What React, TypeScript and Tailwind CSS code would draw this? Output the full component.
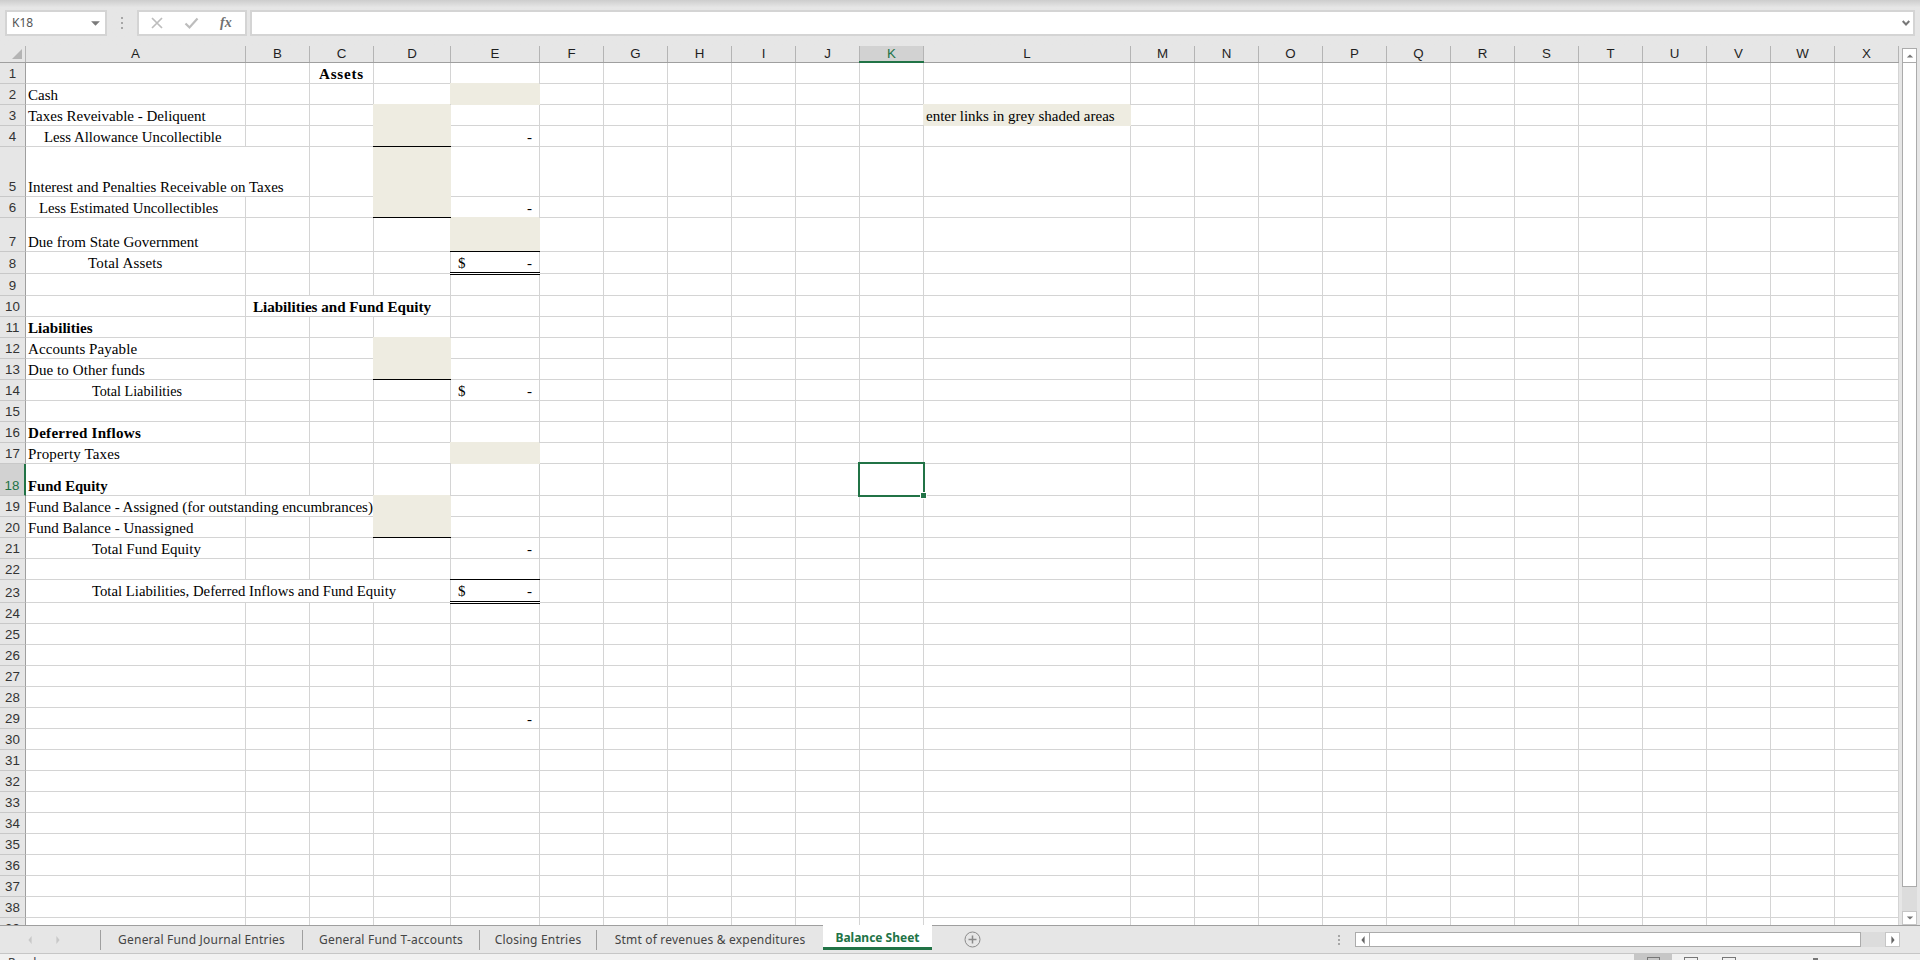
import React from "react";

const cols: [string, string][] = [
  ["A", "w-[220px]"], ["B", "w-[64px]"], ["C", "w-[64px]"], ["D", "w-[77px]"], ["E", "w-[89px]"],
  ["F", "w-[64px]"], ["G", "w-[64px]"], ["H", "w-[64px]"], ["I", "w-[64px]"], ["J", "w-[64px]"], ["K", "w-[64px]"],
  ["L", "w-[207px]"], ["M", "w-[64px]"], ["N", "w-[64px]"], ["O", "w-[64px]"], ["P", "w-[64px]"], ["Q", "w-[64px]"],
  ["R", "w-[64px]"], ["S", "w-[64px]"], ["T", "w-[64px]"], ["U", "w-[64px]"], ["V", "w-[64px]"], ["W", "w-[64px]"], ["X", "w-[64px]"],
];

const heights: Record<number, string> = { 5: "h-[50px]", 7: "h-[34px]", 8: "h-[22px]", 9: "h-[22px]", 18: "h-[32px]", 23: "h-[23px]" };

type Cell = {
  t?: string;
  pad?: string;
  size?: string;
  bold?: boolean;
  center?: boolean;
  fill?: boolean;
  line?: boolean;
  dbl?: boolean;
  dash?: boolean;
  dollar?: boolean;
  noR?: boolean;
  sel?: boolean;
};

const data: Record<number, Record<string, Cell>> = {
  1: { C: { t: "Assets", bold: true, center: true, size: "text-[15.1px] tracking-[0.8px]" } },
  2: { A: { t: "Cash" }, E: { fill: true } },
  3: { A: { t: "Taxes Reveivable - Deliquent" }, D: { fill: true }, L: { t: "enter links in grey shaded areas", fill: true } },
  4: { A: { t: "Less Allowance Uncollectible", pad: "pl-[18px]", size: "text-[14.8px]" }, D: { fill: true, line: true }, E: { dash: true } },
  5: { A: { t: "Interest and Penalties Receivable on Taxes", noR: true }, D: { fill: true } },
  6: { A: { t: "Less Estimated Uncollectibles", pad: "pl-[13px]", size: "text-[14.8px]" }, D: { fill: true, line: true }, E: { dash: true } },
  7: { A: { t: "Due from State Government" }, E: { fill: true, line: true } },
  8: { A: { t: "Total Assets", pad: "pl-[62px] pb-[1px]", size: "text-[15px] tracking-[0.15px]" }, E: { dollar: true, dash: true, dbl: true, pad: "pb-[1px]" } },
  10: { B: { noR: true }, C: { t: "Liabilities and Fund Equity", bold: true, center: true, noR: true } },
  11: { A: { t: "Liabilities", bold: true } },
  12: { A: { t: "Accounts Payable", size: "text-[15px] tracking-[0.08px]" }, D: { fill: true } },
  13: { A: { t: "Due to Other funds", size: "text-[15px] tracking-[0.08px]" }, D: { fill: true, line: true } },
  14: { A: { t: "Total Liabilities", pad: "pl-[66px]", size: "text-[14.2px]" }, E: { dollar: true, dash: true } },
  16: { A: { t: "Deferred Inflows", bold: true, size: "text-[15.1px] tracking-[0.25px]" } },
  17: { A: { t: "Property Taxes", size: "text-[15px] tracking-[0.15px]" }, E: { fill: true } },
  18: { A: { t: "Fund Equity", bold: true, size: "text-[14.7px]" }, K: { sel: true } },
  19: { A: { t: "Fund Balance - Assigned (for outstanding encumbrances)", noR: true }, B: { noR: true }, C: { noR: true }, D: { fill: true } },
  20: { A: { t: "Fund Balance - Unassigned" }, D: { fill: true, line: true } },
  21: { A: { t: "Total Fund Equity", pad: "pl-[66px]" }, E: { dash: true } },
  22: { E: { line: true } },
  23: { A: { t: "Total Liabilities, Deferred Inflows and Fund Equity", pad: "pl-[66px] pb-[2px]", size: "text-[14.75px]", noR: true }, B: { noR: true }, C: { noR: true }, E: { dollar: true, dash: true, dbl: true, pad: "pb-[2px]" } },
  29: { E: { dash: true } },
};

function GridCell({ width, c }: { width: string; c?: Cell }) {
  const cell = c ?? {};
  const border = cell.fill
    ? "bg-[#eeece1] border-r border-b border-[#eeece1] shadow-[-1px_-1px_0_0_#eeece1]"
    : cell.noR
    ? "border-b border-[#d4d4d4]"
    : "border-r border-b border-[#d4d4d4]";
  const just = cell.center ? "justify-center" : cell.dollar ? "justify-between px-[7px]" : cell.dash ? "justify-end pr-[7px]" : "justify-start";
  return (
    <div className={`relative flex h-full shrink-0 items-end ${width} ${border} ${just} ${cell.pad ?? (cell.center || cell.dash ? "" : "pl-[2px]")}`}>
      {cell.t && (
        <span className={`relative z-[1] whitespace-nowrap leading-[17px] text-black ${cell.bold ? "font-bold" : ""} ${cell.size ?? (cell.bold ? "text-[15.1px]" : "text-[15px]")}`}>{cell.t}</span>
      )}
      {cell.dollar && <span className="whitespace-nowrap text-[15px] leading-[17px] text-black">$</span>}
      {cell.dash && <span className="whitespace-nowrap text-[15px] leading-[17px] text-black">-</span>}
      {cell.line && <div className="absolute -left-px right-[-1px] bottom-[-1px] z-10 h-px bg-black" />}
      {cell.dbl && <div className="absolute -left-px right-[-1px] bottom-[-2px] z-10 h-[3px] border-y border-black bg-white" />}
      {cell.sel && (
        <>
          <div className="absolute -top-[2px] -left-[2px] z-20 h-[35px] w-[67px] border-2 border-[#217346]" />
          <div className="absolute top-[28px] left-[60px] z-30 h-[7px] w-[7px] border border-white bg-[#217346]" />
        </>
      )}
    </div>
  );
}

function Tri({ dir, color = "#777777", size = 7 }: { dir: "up" | "down" | "left" | "right"; color?: string; size?: number }) {
  const p = { up: "0,7 4,3 8,7", down: "0,3 8,3 4,7", left: "6,0 6,10 2,5", right: "2,0 2,10 6,5" }[dir];
  return (
    <svg width={size + 1} height={size + 1} viewBox="0 0 8 10" fill={color}>
      <polygon points={p} />
    </svg>
  );
}

function VDots({ gap = "gap-[3px]" }: { gap?: string }) {
  return (
    <div className={`flex flex-col ${gap}`}>
      <div className="h-[2px] w-[2px] bg-[#a6a6a6]" />
      <div className="h-[2px] w-[2px] bg-[#a6a6a6]" />
      <div className="h-[2px] w-[2px] bg-[#a6a6a6]" />
    </div>
  );
}

function TopBar() {
  return (
    <div className="flex h-[46px] shrink-0 items-start bg-gradient-to-b from-[#cdcdcd] from-0% to-[#e6e6e6] to-[16%] pt-[10px] pl-[5px] pr-[5px]">
      <div className="flex h-[26px] w-[102px] items-center justify-between border-2 border-[#d4d4d4] bg-white pr-[4px] pl-[5px]">
        <span className="text-[12px] text-[#555555] font-['Noto_Sans',sans-serif]">K18</span>
        <Tri dir="down" color="#7a7a7a" size={10} />
      </div>
      <div className="flex h-[26px] w-[30px] items-center justify-center">
        <VDots />
      </div>
      <div className="flex h-[26px] w-[110px] items-center border-2 border-[#d4d4d4] bg-white pl-[11px]">
        <svg width="14" height="14" viewBox="0 0 14 14" fill="none" stroke="#bdbdbd" strokeWidth="1.7">
          <path d="M2 2 L12 12 M12 2 L2 12" />
        </svg>
        <svg className="ml-[20px]" width="15" height="14" viewBox="0 0 15 14" fill="none" stroke="#bdbdbd" strokeWidth="2.2">
          <path d="M1.5 7.5 L5.5 11.5 L13.5 2.5" />
        </svg>
        <span className="ml-[21px] text-[14px] font-bold italic leading-none text-[#707070] font-['Liberation_Serif',serif]">fx</span>
      </div>
      <div className="ml-[3px] flex h-[26px] flex-1 items-center justify-end border-2 border-[#d4d4d4] bg-white pr-[3px]">
        <svg width="8" height="6" viewBox="0 0 8 6" fill="none" stroke="#777777" strokeWidth="2">
          <path d="M0.7 1 L4 4.5 L7.3 1" />
        </svg>
      </div>
    </div>
  );
}

function HeaderRow() {
  return (
    <div className="flex h-[17px] shrink-0 border-b border-[#9f9f9f]">
      <div className="flex w-[26px] shrink-0 items-end justify-end border-r border-[#b4b4b4] pr-[3px] pb-[3px]">
        <svg width="10" height="10" viewBox="0 0 10 10" fill="#b4b4b4"><polygon points="10,0 10,10 0,10" /></svg>
      </div>
      {cols.map(([n, w]) =>
        n === "K" ? (
          <div key={n} className={`relative flex shrink-0 items-center justify-center border-r border-[#b4b4b4] bg-[#d2d2d2] text-[13.33px] leading-none text-[#217346] ${w}`}>
            {n}
            <div className="absolute right-[-1px] bottom-[-1px] -left-px h-[2px] bg-[#217346]" />
          </div>
        ) : (
          <div key={n} className={`flex shrink-0 items-center justify-center border-r border-[#b4b4b4] text-[13.33px] leading-none text-[#1f1f1f] ${w}`}>
            {n}
          </div>
        ),
      )}
    </div>
  );
}

function Row({ n }: { n: number }) {
  const h = heights[n] ?? "h-[21px]";
  const active = n === 18;
  return (
    <div className={`flex shrink-0 ${h}`}>
      <div
        className={`flex h-full w-[26px] shrink-0 items-end justify-center border-b pb-[1px] text-[13.33px] leading-[17px] ${
          active ? "border-r-2 border-b-[#c8c8c8] border-r-[#217346] bg-[#d2d2d2] text-[#217346]" : "border-r border-b-[#c8c8c8] border-r-[#9f9f9f] text-[#333333]"
        }`}
      >
        {n}
      </div>
      <div className="flex h-full font-['Liberation_Serif',serif]">
        {cols.map(([c, w]) => (
          <GridCell key={c} width={w} c={data[n]?.[c]} />
        ))}
      </div>
    </div>
  );
}

function VScroll() {
  return (
    <div className="flex w-[21px] shrink-0 flex-col pt-[2px] pl-[3px]">
      <div className="flex h-[15px] w-[15px] shrink-0 items-center justify-center border border-[#ababab] bg-white">
        <Tri dir="up" color="#777777" />
      </div>
      <div className="h-[824px] w-[15px] shrink-0 border border-t-0 border-[#ababab] bg-white" />
      <div className="w-[15px] flex-1 bg-[#dcdcdc]" />
      <div className="flex h-[14px] w-[15px] shrink-0 items-center justify-center border border-[#c6c6c6] bg-white">
        <Tri dir="down" color="#777777" />
      </div>
    </div>
  );
}

const tabs: [string, string][] = [
  ["General Fund Journal Entries", "w-[202px]"],
  ["General Fund T-accounts", "w-[177px]"],
  ["Closing Entries", "w-[117px]"],
  ["Stmt of revenues & expenditures", "w-[227px]"],
];

function TabBar() {
  return (
    <div className="flex h-[29px] shrink-0 border-y border-t-[#9f9f9f] border-b-[#c6c6c6] font-['Noto_Sans',sans-serif]">
      <div className="flex h-full w-[100px] shrink-0 items-center gap-[20px] pl-[26px]">
        <Tri dir="left" color="#c8c8c8" />
        <Tri dir="right" color="#c8c8c8" />
      </div>
      {tabs.map(([t, w]) => (
        <div key={t} className={`flex h-full shrink-0 items-center ${w}`}>
          <div className="h-[20px] w-px bg-[#9f9f9f]" />
          <span className="flex-1 text-center text-[12px] tracking-[0.2px] whitespace-nowrap text-[#444444]">{t}</span>
        </div>
      ))}
      <div className="-mt-px flex h-[25px] w-[109px] shrink-0 items-center justify-center border-b-[3px] border-[#217346] bg-white pt-[3px]">
        <span className="text-[12px] font-bold whitespace-nowrap text-[#217346]">Balance Sheet</span>
      </div>
      <div className="flex h-full w-[80px] shrink-0 items-center justify-center">
        <svg width="17" height="17" viewBox="0 0 17 17" fill="none" stroke="#8a8a8a">
          <circle cx="8.5" cy="8.5" r="7.5" />
          <path d="M8.5 4.5 V12.5 M4.5 8.5 H12.5" strokeWidth="1.5" />
        </svg>
      </div>
      <div className="flex flex-1 items-center justify-end pr-[20px]">
        <div className="mr-[15px]">
          <VDots gap="gap-[2px]" />
        </div>
        <div className="flex h-[15px] w-[545px] items-stretch">
          <div className="flex w-[15px] items-center justify-center border border-[#ababab] bg-white">
            <Tri dir="left" color="#666666" />
          </div>
          <div className="w-[491px] border-y border-r border-[#ababab] bg-white" />
          <div className="flex-1 bg-[#dcdcdc]" />
          <div className="flex w-[15px] items-center justify-center border border-[#c6c6c6] bg-white">
            <Tri dir="right" color="#666666" />
          </div>
        </div>
      </div>
    </div>
  );
}

function StatusBar() {
  return (
    <div className="flex flex-1 items-start overflow-hidden bg-[#f1f1f1] font-['Noto_Sans',sans-serif]">
      <span className="mt-[2px] ml-[8px] text-[12px] leading-[14px] text-[#444444]">Ready</span>
      <div className="ml-auto flex h-[6px] w-[38px] shrink-0 justify-center bg-[#c6c6c6] pt-[3px]">
        <div className="h-[14px] w-[13px] border border-[#777777]" />
      </div>
      <div className="flex h-[6px] w-[38px] shrink-0 justify-center pt-[3px]">
        <div className="h-[14px] w-[14px] border border-[#777777]" />
      </div>
      <div className="flex h-[6px] w-[38px] shrink-0 justify-center pt-[3px]">
        <div className="h-[14px] w-[14px] border border-[#777777]" />
      </div>
      <div className="ml-[65px] mt-[4px] h-[4px] w-[5px] shrink-0 bg-[#777777]" />
      <span className="mt-[3px] mr-[6px] ml-[69px] w-[27px] shrink-0 text-[11px] leading-[14px] whitespace-nowrap text-[#444444]">100%</span>
    </div>
  );
}

export default function App() {
  const rows = Array.from({ length: 39 }, (_, i) => i + 1);
  return (
    <div className="flex h-[960px] w-[1920px] flex-col overflow-hidden bg-[#e6e6e6] font-['Liberation_Sans',sans-serif]">
      <TopBar />
      <div className="flex h-[879px] shrink-0 overflow-hidden">
        <div className="flex w-[1899px] shrink-0 flex-col overflow-hidden bg-white">
          <div className="bg-[#e6e6e6]">
            <HeaderRow />
          </div>
          {rows.map((n) => (
            <div key={n} className="bg-[linear-gradient(90deg,#e6e6e6_26px,#ffffff_26px)]">
              <Row n={n} />
            </div>
          ))}
        </div>
        <VScroll />
      </div>
      <TabBar />
      <StatusBar />
    </div>
  );
}
